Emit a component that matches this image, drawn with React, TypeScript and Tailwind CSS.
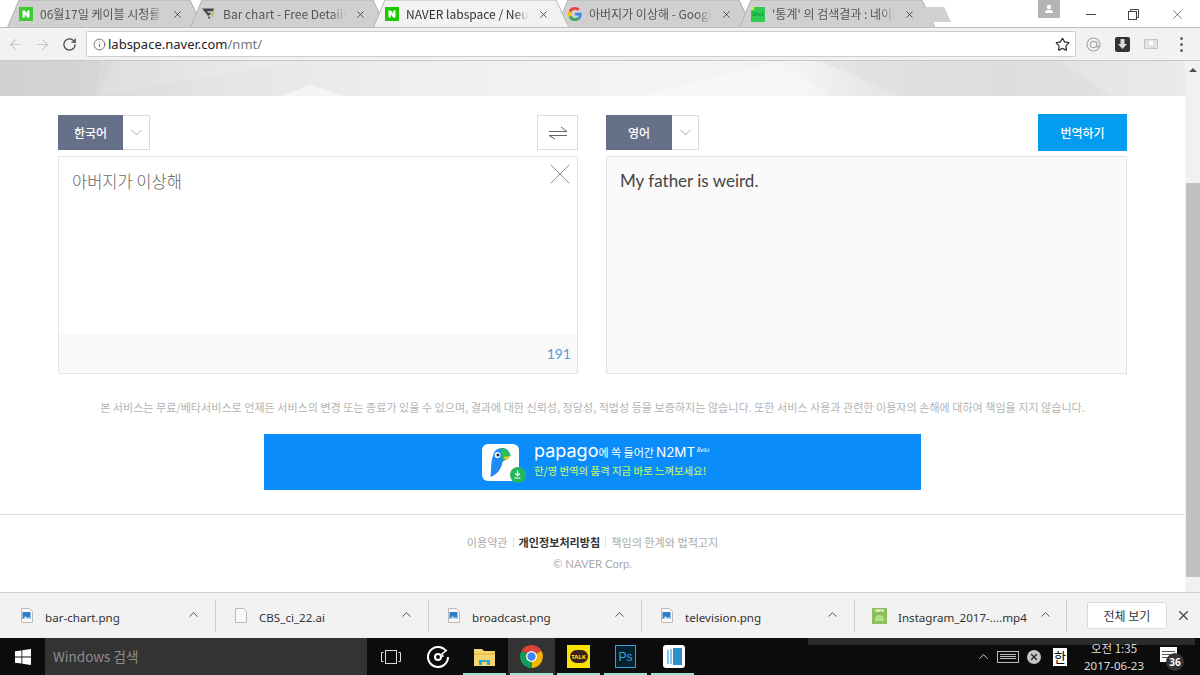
import { ArrowLeft, ArrowRight, ChevronDown, ChevronUp, Info, RotateCw, Star, X } from 'lucide-react';
import type { ReactNode } from 'react';

const ko = "font-['Noto_Sans_CJK_KR','Noto_Sans',sans-serif]";

const NaverIcon = ({ fill = '#3ec92f' }: { fill?: string }) => (
  <svg width="14" height="14" viewBox="0 0 14 14">
    <rect width="14" height="14" fill={fill} />
    <path d="M3.500 3.500h2.400l2.300 3.300V3.500h2.300v7H8.100L5.800 7.200v3.300H3.500z" fill="#fff" />
  </svg>
);

const ChartIcon = () => (
  <svg width="15" height="14" viewBox="0 0 15 14">
    <path d="M0 1h13l-1.500 3H5.500l.8 1.600h3.700L8.500 8.200H7.500L6.700 10 5 7z" fill="#444" />
    <path d="M10 8l4-6-3 9z" fill="#8cc63f" />
    <path d="M6 10l2 3 1-3z" fill="#555" />
  </svg>
);

const GoogleIcon = () => (
  <svg width="14" height="14" viewBox="0 0 48 48">
    <path fill="#EA4335" d="M24 9.500c3.500 0 6.700 1.300 9.100 3.500l6.800-6.800C35.800 2.400 30.200 0 24 0 14.600 0 6.500 5.400 2.600 13.200l7.900 6.200C12.400 13.700 17.700 9.500 24 9.500z" />
    <path fill="#4285F4" d="M47 24.500c0-1.600-.1-3.100-.4-4.500H24v9h12.900c-.6 3-2.300 5.500-4.800 7.200l7.700 6C44.300 38 47 31.800 47 24.500z" />
    <path fill="#FBBC05" d="M10.500 28.600c-.5-1.400-.8-3-.8-4.600s.3-3.200.8-4.600l-7.900-6.200C1 16.500 0 20.100 0 24s1 7.500 2.600 10.800z" />
    <path fill="#34A853" d="M24 48c6.500 0 11.900-2.100 15.900-5.800l-7.700-6c-2.200 1.500-4.900 2.300-8.200 2.300-6.300 0-11.600-4.200-13.500-9.900l-7.900 6.200C6.500 42.600 14.600 48 24 48z" />
  </svg>
);

const DictIcon = () => (
  <div className="relative flex h-[15px] w-[15px] items-center justify-center bg-[#2ecb52] text-[6px] leading-none text-[#0d7a2b]">
    Dict
    <span className="absolute left-0 top-0 h-[3px] w-[3px] bg-[#e6e645]" />
  </div>
);

const Tab = ({ icon, label, active }: { icon: ReactNode; label: string; active?: boolean }) => (
  <div className={`relative -mr-[14px] flex h-[27px] w-[197px] shrink-0 items-center pl-[12px] ${active ? 'z-10' : ''}`}>
    <svg className="absolute inset-0" width="197" height="28" viewBox="0 0 197 28">
      <path
        d="M0.500 27.500 L12 0 L183 0 L196 27.500"
        fill={active ? '#f2f2f2' : '#d0d0d0'}
        stroke={active ? '#b8b8b8' : '#b0b0b0'}
        strokeWidth="1"
      />
    </svg>
    <div className="relative flex w-full items-center pt-px">
      <div className="flex w-[14px] shrink-0 justify-center">{icon}</div>
      <span
        className={`${ko} ml-[7px] w-[123px] overflow-hidden whitespace-nowrap text-[12px] leading-[16px] [mask-image:linear-gradient(to_right,#000_88%,transparent)] ${active ? 'text-[#333]' : 'text-[#555]'}`}
      >
        {label}
      </span>
      <X size={11} strokeWidth={2} className="ml-[9px] text-[#444]" />
    </div>
  </div>
);

const TabStrip = () => (
  <div className="flex h-[27px] shrink-0 bg-white">
    <div className="flex shrink-0 pl-[7px] pr-[14px]">
      <Tab icon={<NaverIcon />} label="06월17일 케이블 시청률 순위" />
      <Tab icon={<ChartIcon />} label="Bar chart - Free Detailed" />
      <Tab icon={<NaverIcon fill="#1ec800" />} label="NAVER labspace / Neural" active />
      <Tab icon={<GoogleIcon />} label="아버지가 이상해 - Google" />
      <Tab icon={<DictIcon />} label="'통계' 의 검색결과 : 네이버" />
    </div>
    <div className="-ml-[16px] mt-[7px] h-[15px] w-[31px] shrink-0 bg-[#d0d0d0] [clip-path:polygon(0_0,78%_0,100%_100%,18%_100%)]" />
    <div className="ml-[87px] flex h-[18px] w-[22px] shrink-0 items-center justify-center bg-[#b4b4b4]">
      <svg width="10" height="10" viewBox="0 0 10 10" fill="#fff">
        <circle cx="5" cy="3" r="2.200" />
        <path d="M1 9c0-2.500 1.500-3 4-3s4 .5 4 3z" />
      </svg>
    </div>
    <div className="ml-auto flex h-[27px] items-start">
      <div className="flex h-[28px] w-[42px] items-center justify-center">
        <span className="block h-px w-[10px] bg-[#444]" />
      </div>
      <div className="flex h-[28px] w-[42px] items-center justify-center">
        <svg width="11" height="11" viewBox="0 0 11 11" fill="none" stroke="#444">
          <rect x="0.500" y="2.500" width="8" height="8" />
          <path d="M2.500 2.500v-2h8v8h-2" />
        </svg>
      </div>
      <div className="flex h-[28px] w-[46px] items-center justify-center">
        <X size={15} strokeWidth={1} className="text-[#333]" />
      </div>
    </div>
  </div>
);

const Toolbar = () => (
  <div className="z-20 flex h-[34px] shrink-0 items-center border-y border-y-[#c8c8c8] border-t-[#bdbdbd] bg-[#f2f2f2]">
    <ArrowLeft size={17} strokeWidth={1.5} className="ml-[7px] text-[#c9c9c9]" />
    <ArrowRight size={17} strokeWidth={1.5} className="ml-[10px] text-[#c9c9c9]" />
    <RotateCw size={15} strokeWidth={2} className="ml-[11px] text-[#444]" />
    <div className="ml-[9px] flex h-[26px] w-[990px] items-center rounded-[2px] border border-[#cdcdcd] bg-white pl-[6px]">
      <Info size={13} strokeWidth={1.5} className="text-[#555]" />
      <span className="ml-[2px] font-['Noto_Sans',sans-serif] text-[13px] leading-none text-[#222]">
        labspace.naver.com<span className="text-[#777]">/nmt/</span>
      </span>
      <Star size={15} strokeWidth={2} className="ml-auto mr-[5px] text-[#333]" />
    </div>
    <svg className="ml-[10px]" width="15" height="15" viewBox="0 0 15 15" fill="none" stroke="#aaa" strokeWidth="1.200">
      <circle cx="7.500" cy="7.500" r="6.500" />
      <circle cx="7.500" cy="7.500" r="3.200" />
      <path d="M10.700 4.500v5c0 1 2 1 2-1" />
    </svg>
    <div className="ml-[14px] flex h-[15px] w-[15px] items-center justify-center rounded-[2px] bg-[#333]">
      <svg width="9" height="10" viewBox="0 0 9 10" fill="#ddd">
        <path d="M2.500 0h4v5H9L4.500 10 0 5h2.500z" />
      </svg>
    </div>
    <div className="relative ml-[14px] h-[10px] w-[14px] rounded-[1px] border border-[#c2c2c2] bg-[#e2e2e2]">
      <span className="absolute left-[4px] top-[1px] h-[4px] w-[4px] bg-white" />
    </div>
    <div className="ml-[22px] flex flex-col gap-[3px]">
      <span className="h-[3px] w-[3px] rounded-full bg-[#666]" />
      <span className="h-[3px] w-[3px] rounded-full bg-[#666]" />
      <span className="h-[3px] w-[3px] rounded-full bg-[#666]" />
    </div>
  </div>
);

const LangSelect = ({ label, wide }: { label: string; wide: string }) => (
  <div className="flex h-[35px]">
    <div className={`${ko} ${wide} flex items-center justify-center bg-[#667089] text-[12px] font-medium text-white`}>{label}</div>
    <div className="flex w-[27px] items-center justify-center border-y border-r border-[#dcdcdc] bg-white">
      <ChevronDown size={19} strokeWidth={0.8} className="text-[#777]" />
    </div>
  </div>
);

const Translator = () => (
  <div className="flex gap-[28px] pl-[58px] pt-[19px]">
    <div className="w-[520px]">
      <div className="flex items-center justify-between">
        <LangSelect label="한국어" wide="w-[65px]" />
        <div className="flex h-[35px] w-[41px] items-center justify-center border border-[#dcdcdc]">
          <svg width="20" height="14" viewBox="0 0 20 14" fill="none" stroke="#666" strokeWidth="1">
            <path d="M1 5.500h18L13 1" />
            <path d="M19 9.500H1L7 13" />
          </svg>
        </div>
      </div>
      <div className="mt-[6px] flex h-[218px] flex-col border border-[#e4e4e4]">
        <div className="relative flex-1 pl-[13px] pt-[12px]">
          <span className={`${ko} text-[16.500px] font-light leading-[24px] text-[#666]`}>아버지가 이상해</span>
          <X size={36} strokeWidth={0.55} className="absolute -right-px -top-px text-[#777]" />
        </div>
        <div className="flex h-[39px] items-end justify-end bg-[#f9f9f9] pb-[10px] pr-[6px]">
          <span className="font-['Lato',sans-serif] text-[14px] leading-[18px] text-[#5b9bd5]">191</span>
        </div>
      </div>
    </div>
    <div className="w-[521px]">
      <div className="flex h-[35px] items-center justify-between">
        <LangSelect label="영어" wide="w-[66px]" />
        <div className={`${ko} -my-px flex h-[37px] w-[89px] items-center justify-center bg-[#039cf0] text-[12px] font-medium text-white`}>번역하기</div>
      </div>
      <div className="mt-[6px] h-[218px] border border-[#e4e4e4] bg-[#fafafa] pl-[13px] pt-[12px]">
        <span className="font-['Lato',sans-serif] text-[17px] leading-[24px] text-[#444]">My father is weird.</span>
      </div>
    </div>
  </div>
);

const PapagoIcon = () => (
  <div className="relative h-[37px] w-[37px] rounded-[6px] bg-white">
    <svg width="37" height="37" viewBox="0 0 36 37">
      <path d="M8 33c1-8 0-15 3-23 1-4 5-6 9-6 4 0 7 3 8 8l-8 6c-1 7-6 13-12 15z" fill="#1c8cf2" />
      <path d="M18 4c5 0 9 3 10 8l-8 5c-1-4-1-9-2-13z" fill="#2dbd5a" />
      <path d="M21 13l7-1-4 5z" fill="#f5c13c" />
      <circle cx="15" cy="11" r="3" fill="#fff" />
      <circle cx="15.500" cy="11" r="1.500" fill="#1a2a3a" />
    </svg>
    <div className="absolute -bottom-[2px] -right-[7px] flex h-[16px] w-[16px] items-center justify-center rounded-full bg-[#22b95a]">
      <svg width="9" height="9" viewBox="0 0 9 9" fill="none" stroke="#fff" strokeWidth="1.200">
        <path d="M4.500 0.500v5M2.300 3.500l2.200 2.200 2.200-2.200M1.500 8h6" />
      </svg>
    </div>
  </div>
);

const Banner = () => (
  <div className="ml-[264px] mt-[19px] flex h-[56px] w-[657px] items-center justify-center gap-[15px] bg-[#0a8dfb] pl-[6px]">
    <PapagoIcon />
    <div className={`${ko} mb-[7px] flex flex-col leading-none`}>
      <div className="flex items-baseline whitespace-nowrap text-[11px] text-white">
        <span className="font-['Inter',sans-serif] text-[18px] font-normal leading-[19px]">papago</span>
        <span>에 쏙 들어간</span>
        <span className="ml-[2px] font-['Inter',sans-serif] text-[13.500px]">N2MT</span>
        <span className="ml-[1px] -translate-y-[5px] text-[6px] italic">Beta</span>
      </div>
      <div className="mt-[6px] whitespace-nowrap text-[10.400px] font-medium text-[#b9ec78]">한/영 번역의 품격 지금 바로 느껴보세요!</div>
    </div>
  </div>
);

const Footer = () => (
  <div className="mt-[24px] border-t border-[#dedede] pt-[19px]">
    <div className={`${ko} flex items-center justify-center text-[11.100px] leading-[16px] text-[#aaa]`}>
      <span>이용약관</span>
      <span className="mx-[5px] h-[10px] w-px bg-[#ddd]" />
      <span className="font-bold text-[#333]">개인정보처리방침</span>
      <span className="mx-[5px] h-[10px] w-px bg-[#ddd]" />
      <span>책임의 한계와 법적고지</span>
    </div>
    <div className="mt-[6px] text-center font-['Lato',sans-serif] text-[11.300px] leading-[16px] text-[#aaa]">© NAVER Corp.</div>
  </div>
);

const Hero = () => (
  <div className="h-[35px] bg-[linear-gradient(90deg,#d2d2d2_0%,#e4e4e4_18%,#efefef_35%,#f4f4f4_55%,#f3f3f3_68%,#e6e6e6_74%,#e1e1e1_85%,#eaeaea_100%)]">
    <svg width="1185" height="35" viewBox="0 0 1185 35">
      <polygon points="0,0 115,0 95,35 0,35" fill="#cfcfcf" opacity="0.5" />
      <polygon points="100,0 300,0 95,35" fill="#fff" opacity="0.12" />
      <polygon points="780,0 830,35 640,35" fill="#fff" opacity="0.25" />
      <polygon points="820,0 1060,0 1110,35 900,35" fill="#d8d8d8" opacity="0.35" />
      <polygon points="280,35 310,24 345,35" fill="#fff" opacity="0.5" />
    </svg>
  </div>
);

const Page = () => (
  <div className="flex min-h-0 flex-1">
    <div className="min-w-0 flex-1 bg-white">
      <Hero />
      <Translator />
      <p className={`${ko} mt-[25px] whitespace-nowrap text-center text-[11.070px] leading-[16px] text-[#b4b4b4]`}>
        본 서비스는 무료/베타서비스로 언제든 서비스의 변경 또는 종료가 있을 수 있으며, 결과에 대한 신뢰성, 정당성, 적법성 등을 보증하지는 않습니다. 또한 서비스 사용과 관련한 이용자의 손해에 대하여 책임을 지지 않습니다.
      </p>
      <Banner />
      <Footer />
    </div>
    <div className="flex w-[15px] shrink-0 flex-col bg-[#f1f1f1]">
      <div className="flex h-[17px] items-center justify-center">
        <span className="h-0 w-0 border-x-[4px] border-b-[4px] border-x-transparent border-b-[#505050]" />
      </div>
      <div className="ml-px mt-[105px] h-[394px] w-[14px] bg-[#c1c1c1]" />
    </div>
  </div>
);

const FileIcon = ({ kind }: { kind: 'image' | 'blank' | 'video' }) => {
  if (kind === 'video') {
    return (
      <div className="flex h-[16px] w-[15px] flex-col items-center bg-[#8bbf5a] pt-px">
        <span className="text-[4px] font-bold leading-none text-white">MP4</span>
        <span className="mt-[2px] h-[6px] w-[9px] rounded-t-full bg-[#b6dc8a]" />
      </div>
    );
  }
  return (
    <svg width="12" height="15" viewBox="0 0 12 15">
      <path d="M.5.500h8l3 3v11H.5z" fill="#fafafa" stroke="#bbb" />
      {kind === 'image' && <rect x="1.500" y="4" width="8" height="7" fill="#2f7fc8" />}
      {kind === 'image' && <path d="M2 11l2.500-3 2 2 1.500-1 1.500 2z" fill="#bfe0f7" />}
    </svg>
  );
};

const DownloadItem = ({ kind, name, width, last }: { kind: 'image' | 'blank' | 'video'; name: string; width: string; last?: boolean }) => (
  <div className={`flex h-[32px] items-center border-r border-[#cfcfcf] ${width} ${last ? 'pr-[13px]' : 'pr-[14px]'}`}>
    <div className="ml-[17px] flex w-[15px] justify-center">
      <FileIcon kind={kind} />
    </div>
    <span className="ml-[11px] mt-[5px] font-['Noto_Sans',sans-serif] text-[11.600px] leading-none text-[#333]">{name}</span>
    <ChevronUp size={15} strokeWidth={1.6} className="-mt-[2px] ml-auto text-[#555]" />
  </div>
);

const DownloadBar = () => (
  <div className="flex h-[46px] shrink-0 items-center border-t border-[#d0d0d0] bg-[#f2f2f2] pl-[2px]">
    <DownloadItem kind="image" name="bar-chart.png" width="w-[214px]" />
    <DownloadItem kind="blank" name="CBS_ci_22.ai" width="w-[213px]" />
    <DownloadItem kind="image" name="broadcast.png" width="w-[213px]" />
    <DownloadItem kind="image" name="television.png" width="w-[213px]" />
    <DownloadItem kind="video" name="Instagram_2017-....mp4" width="w-[212px]" last />
    <div className={`${ko} ml-[20px] flex h-[27px] w-[80px] items-center justify-center rounded-[2px] border border-[#dadada] bg-white text-[12px] text-[#333]`}>
      전체 보기
    </div>
    <X size={15} strokeWidth={2} className="ml-[9px] text-[#444]" />
  </div>
);

const ChromeLogo = () => (
  <svg width="25" height="25" viewBox="0 0 48 48">
    <path d="M5 13A22 22 0 0 1 43 13L24 24z" fill="#db4437" />
    <path d="M43 13A22 22 0 0 1 24 46L24 24z" fill="#f4b400" />
    <path d="M24 46A22 22 0 0 1 5 13L24 24z" fill="#0f9d58" />
    <circle cx="24" cy="24" r="10.500" fill="#fff" />
    <circle cx="24" cy="24" r="8" fill="#4285f4" />
  </svg>
);

const TaskIcon = ({ children, running, active }: { children: ReactNode; running?: boolean; active?: boolean }) => (
  <div className={`relative flex h-full w-[47px] items-center justify-center ${active ? 'bg-[#333]' : ''}`}>
    {children}
    {running && <span className="absolute bottom-0 left-[2px] right-[2px] h-[2px] bg-[#9fe0d8]" />}
  </div>
);

const Taskbar = () => (
  <div className="relative flex h-[37px] shrink-0 items-stretch bg-[#0c0c0c] text-white">
    <span className="absolute left-[808px] top-0 h-[7px] w-[387px] bg-[#2b2b2b]" />
    <div className="flex w-[45px] items-center justify-center">
      <svg width="16" height="16" viewBox="0 0 16 16" fill="#fff">
        <path d="M0 2.300l6.500-.9v6.200H0zM7.300 1.300L16 0v7.600H7.300zM0 8.400h6.500v6.200L0 13.700zM7.300 8.400H16V16l-8.700-1.200z" />
      </svg>
    </div>
    <div className={`${ko} flex w-[322px] items-center bg-[#333] pl-[8px] text-[13.500px] text-[#8d8d8d]`}>Windows 검색</div>
    <TaskIcon>
      <svg width="20" height="14" viewBox="0 0 20 14" fill="none" stroke="#ddd" strokeWidth="1">
        <rect x="4.500" y="0.500" width="11" height="13" />
        <path d="M2.500 2.500h-2v9h2M17.500 2.500h2v9h-2" />
      </svg>
    </TaskIcon>
    <TaskIcon>
      <svg width="22" height="22" viewBox="0 0 22 22" fill="none" stroke="#fff" strokeWidth="2">
        <path d="M19 5A10 10 0 1 0 21 11" />
        <circle cx="11" cy="11" r="3" />
        <path d="M16 11a5 5 0 0 0-1-3l5-4" strokeWidth="1.500" />
      </svg>
    </TaskIcon>
    <TaskIcon running>
      <svg width="21" height="18" viewBox="0 0 21 18">
        <path d="M0 1h8l2 2h11v15H0z" fill="#f5d76e" />
        <rect x="0" y="5" width="21" height="2" fill="#e9c24f" />
        <path d="M5 17v-5h11v5h-3v-3H8v3z" fill="#2aa7d8" />
      </svg>
    </TaskIcon>
    <TaskIcon running active>
      <ChromeLogo />
    </TaskIcon>
    <TaskIcon running>
      <div className="flex h-[23px] w-[23px] items-center justify-center bg-[#fae100]">
        <div className="flex h-[13px] w-[18px] items-center justify-center rounded-full bg-[#3c1e1e] text-[6px] font-bold leading-none text-[#fae100]">TALK</div>
      </div>
    </TaskIcon>
    <TaskIcon running>
      <div className="flex h-[23px] w-[21px] items-center justify-center border border-[#2da5dc] bg-[#04222e] font-['Liberation_Sans',sans-serif] text-[12px] leading-none text-[#31a8e0]">Ps</div>
    </TaskIcon>
    <TaskIcon running>
      <div className="ml-[3px] flex h-[23px] w-[22px] items-center justify-center gap-px rounded-[3px] bg-white">
        <span className="h-[14px] w-[2px] bg-[#8cc4e8]" />
        <span className="h-[15px] w-[2px] bg-[#8cc4e8]" />
        <span className="h-[17px] w-[9px] bg-[#2f8fd0]" />
      </div>
    </TaskIcon>
    <div className="relative ml-auto flex items-center">
      <ChevronUp size={15} strokeWidth={1.5} className="text-[#ddd]" />
      <div className="ml-[6px] flex h-[12px] w-[22px] flex-col justify-center gap-px border border-[#bbb] px-[2px]">
        <span className="h-px bg-[#bbb]" />
        <span className="h-px bg-[#bbb]" />
        <span className="h-px bg-[#bbb]" />
      </div>
      <div className="ml-[8px] flex h-[14px] w-[14px] items-center justify-center rounded-full bg-[#c4c4c4]">
        <X size={10} strokeWidth={3} className="text-[#222]" />
      </div>
      <span className={`${ko} ml-[12px] w-[14px] bg-white text-center text-[13px] leading-[18px] text-black`}>한</span>
      <div className={`${ko} ml-[14px] flex w-[66px] flex-col items-center text-[11.500px] leading-[18px] text-[#ddd]`}>
        <span>오전 1:35</span>
        <span className="font-['Noto_Sans',sans-serif]">2017-06-23</span>
      </div>
      <div className="relative ml-[13px] mr-[22px] h-[26px] w-[18px]">
        <div className="absolute left-0 top-[3px] flex h-[15px] w-[17px] flex-col justify-center gap-[2px] bg-white px-[2px]">
          <span className="h-px bg-[#555]" />
          <span className="h-px bg-[#555]" />
          <span className="h-px bg-[#555]" />
        </div>
        <div className="absolute left-[6px] top-[9px] flex h-[18px] w-[18px] items-center justify-center rounded-full bg-[#333] font-['Noto_Sans',sans-serif] text-[10px] font-bold leading-none text-white">36</div>
      </div>
    </div>
  </div>
);

export default function App() {
  return (
    <div className="flex h-[675px] w-[1200px] flex-col overflow-hidden bg-white">
      <TabStrip />
      <Toolbar />
      <Page />
      <DownloadBar />
      <Taskbar />
    </div>
  );
}
